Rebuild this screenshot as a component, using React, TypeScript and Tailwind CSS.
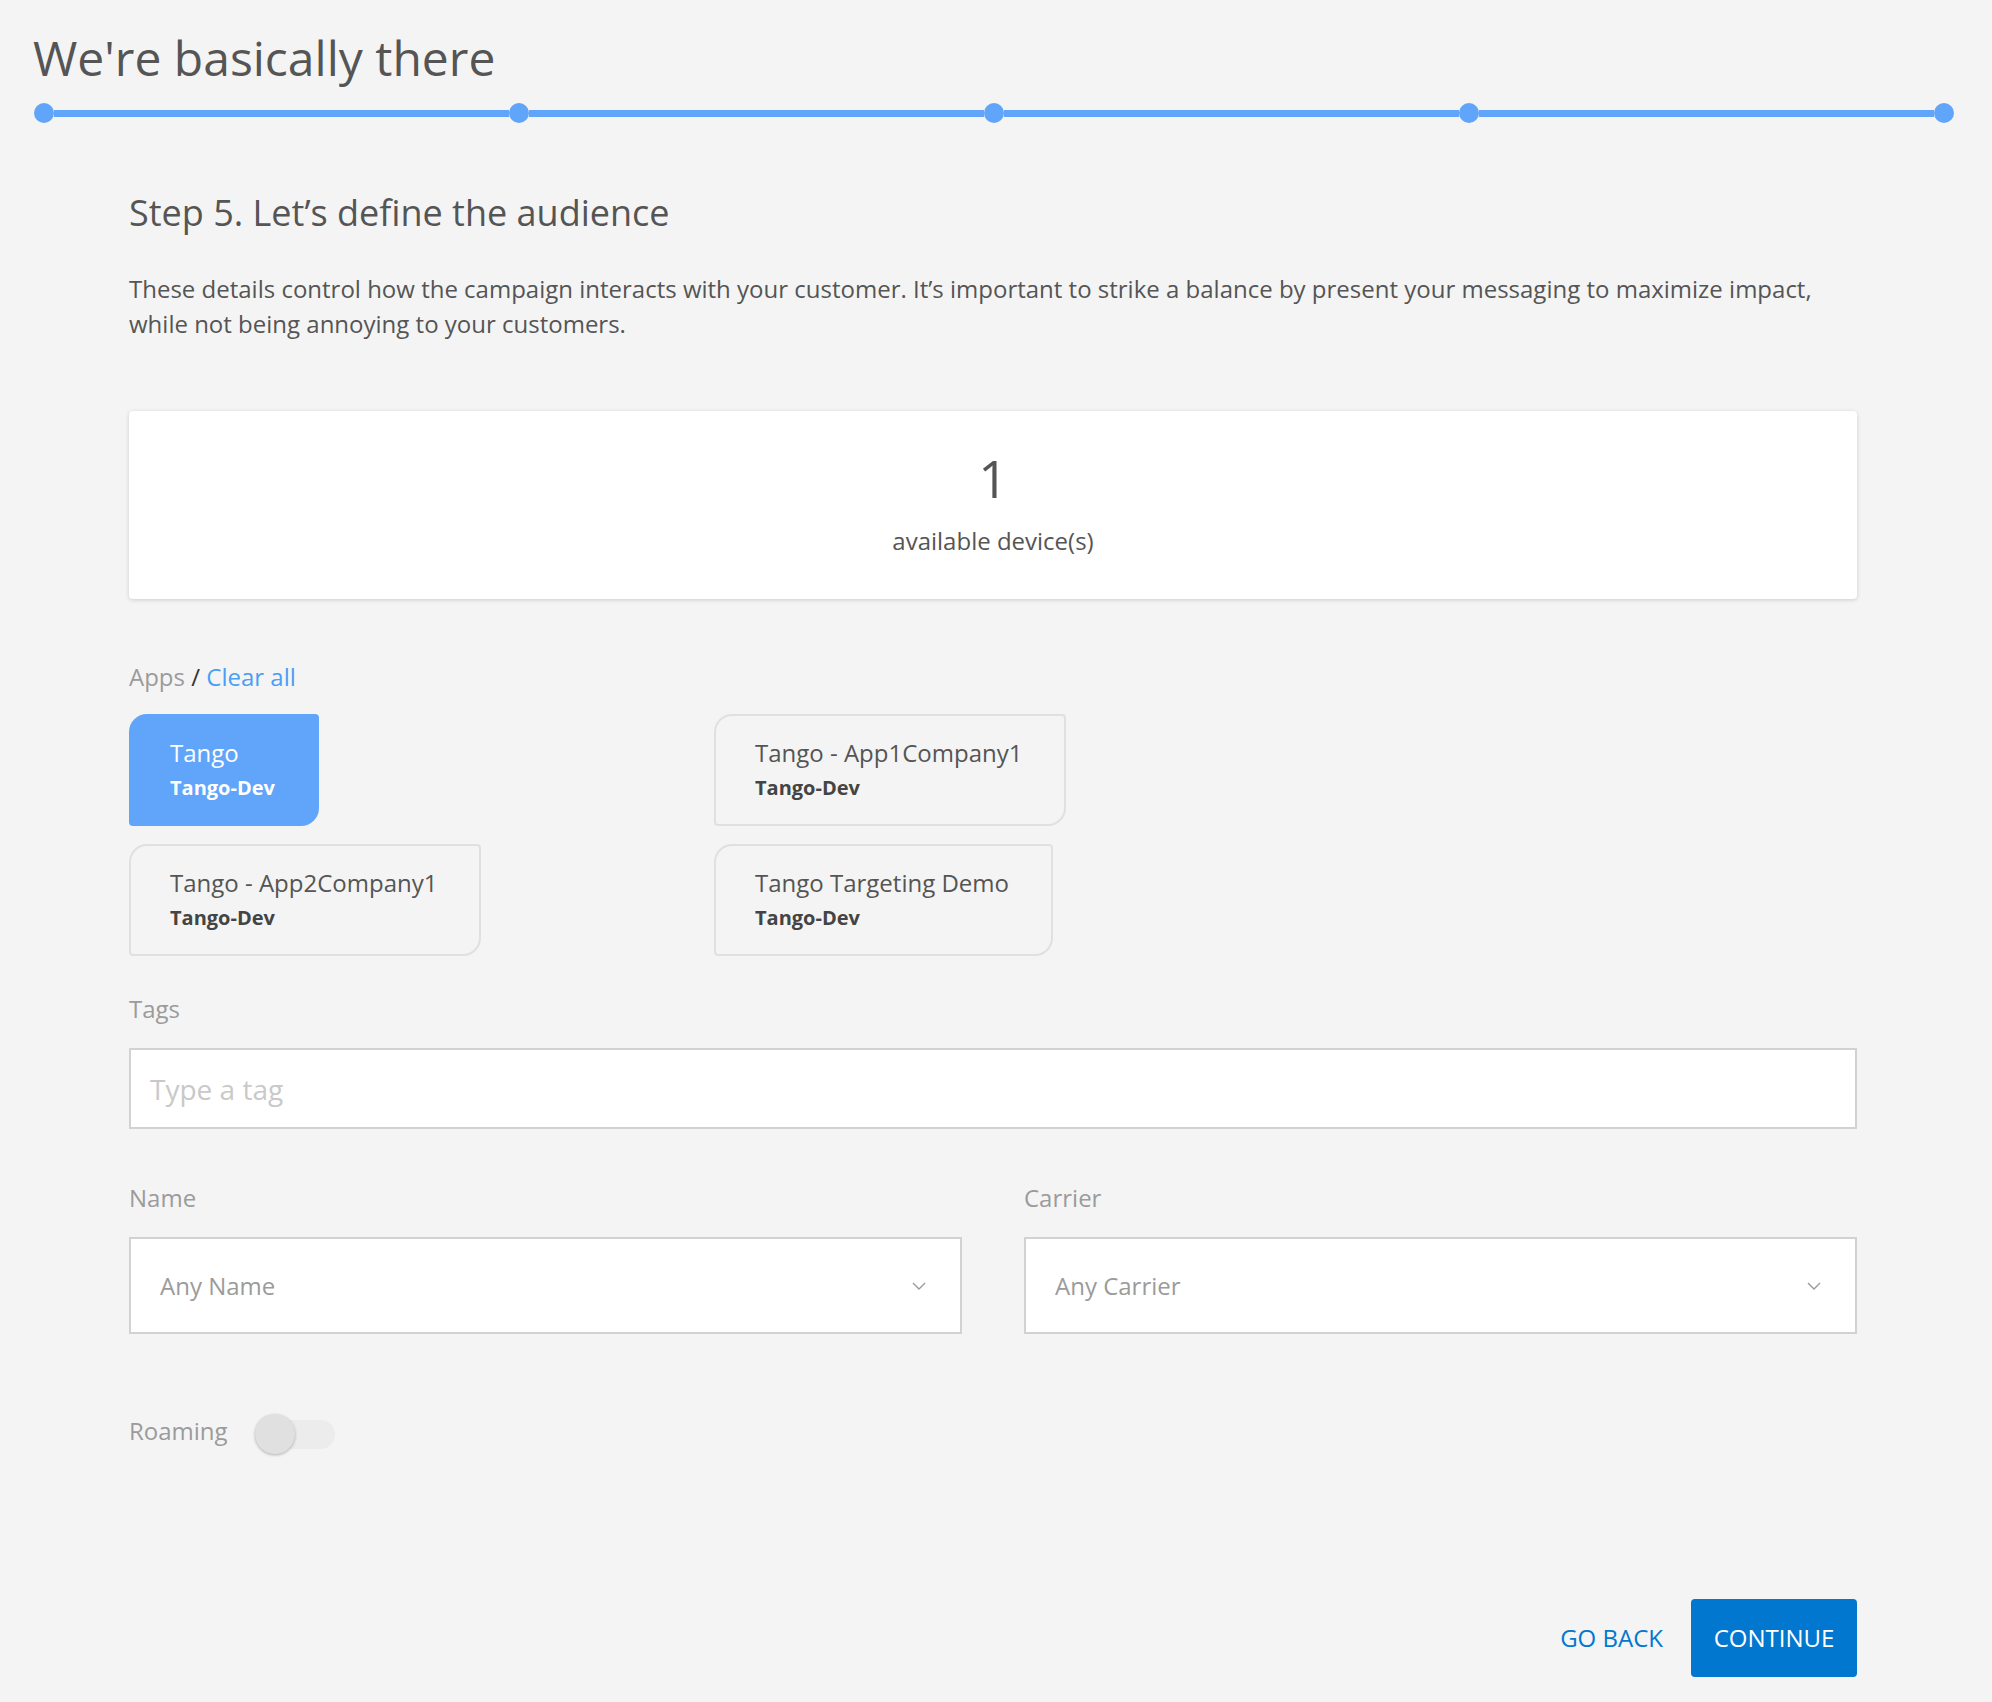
import React from 'react'

const APPS = [
  { name: 'Tango', org: 'Tango-Dev', selected: true },
  { name: 'Tango - App1Company1', org: 'Tango-Dev', selected: false },
  { name: 'Tango - App2Company1', org: 'Tango-Dev', selected: false },
  { name: 'Tango Targeting Demo', org: 'Tango-Dev', selected: false },
]

function Dot() {
  return <div className="h-[20px] w-[20px] shrink-0 rounded-full bg-[#60a5fa]" />
}

function Bar() {
  return <div className="h-[7px] flex-1 bg-[#60a5fa]" />
}

function Chevron() {
  return (
    <svg width="14" height="8" viewBox="0 0 14 8" fill="none">
      <polyline points="1,1 7,7 13,1" stroke="#9a9a9a" strokeWidth="1.4" />
    </svg>
  )
}

function SelectBox({ label, value }: { label: string; value: string }) {
  return (
    <div className="flex flex-col">
      <span className="text-[24px] leading-[24px] text-[#9b9b9b]">{label}</span>
      <div className="mt-[27px] flex h-[97px] items-center justify-between border-2 border-[#d2d2d2] bg-white pl-[29px] pr-[34px]">
        <span className="text-[24px] leading-[24px] text-[#9b9b9b]">{value}</span>
        <Chevron />
      </div>
    </div>
  )
}

export default function App() {
  return (
    <div className="min-h-screen bg-[#f4f4f4] font-['Open_Sans',sans-serif] text-[#555]">
      {/* header + progress */}
      <header className="pl-[34px] pr-[38px] pt-[34px]">
        <h1 className="-ml-px text-[48px] font-normal leading-[48px] text-[#555]">We're basically there</h1>
        <div className="mt-[21px] flex items-center">
          <Dot />
          <Bar />
          <Dot />
          <Bar />
          <Dot />
          <Bar />
          <Dot />
          <Bar />
          <Dot />
        </div>
      </header>

      <main className="pl-[129px] pr-[135px] pb-[24px]">
        <h2 className="mt-[72px] text-[36px] font-normal leading-[36px] text-[#555]">
          Step 5. Let’s define the audience
        </h2>
        <p className="mt-[40px] text-[24px] leading-[35px] text-[#555]">
          These details control how the campaign interacts with your customer. It’s important to strike a balance by
          present your messaging to maximize impact, while not being annoying to your customers.
        </p>

        {/* device count */}
        <div className="mt-[70px] flex h-[188px] flex-col items-center rounded-[4px] bg-white pt-[41px] shadow-[0_1px_4px_rgba(0,0,0,0.16)]">
          <span className="text-[52px] leading-[52px] text-[#555]">1</span>
          <span className="mt-[25px] text-[24px] leading-[24px] text-[#555]">available device(s)</span>
        </div>

        {/* apps */}
        <div className="mt-[66px] text-[24px] leading-[24px]">
          <span className="text-[#9b9b9b]">Apps</span>
          <span className="text-[#333]"> / </span>
          <span className="text-[#4a9ff5]">Clear all</span>
        </div>
        <div className="mt-[25px] grid grid-cols-[585px_auto] justify-start justify-items-start gap-y-[18px]">
          {APPS.map((app) => (
            <div
              key={app.name}
              className={
                app.selected
                  ? 'rounded-tl-[18px] rounded-tr-[4px] rounded-br-[18px] rounded-bl-[4px] border-2 border-[#60a5fa] bg-[#60a5fa] pl-[39px] pr-[42px] pt-[25px] pb-[26px] text-white'
                  : 'rounded-tl-[18px] rounded-tr-[4px] rounded-br-[18px] rounded-bl-[4px] border-2 border-[#e0e0e0] pl-[39px] pr-[42px] pt-[25px] pb-[26px] text-[#555]'
              }
            >
              <div className="text-[24px] leading-[24px]">{app.name}</div>
              <div className={app.selected ? 'mt-[13px] text-[20px] font-bold leading-[20px]' : 'mt-[13px] text-[20px] font-bold leading-[20px] text-[#444]'}>
                {app.org}
              </div>
            </div>
          ))}
        </div>

        {/* tags */}
        <div className="mt-[41px] text-[24px] leading-[24px] text-[#9b9b9b]">Tags</div>
        <div className="mt-[27px] flex h-[81px] items-center border-2 border-[#d2d2d2] bg-white pl-[19px]">
          <span className="text-[28px] leading-[28px] text-[#c9c9c9]">Type a tag</span>
        </div>

        {/* name / carrier */}
        <div className="mt-[57px] grid grid-cols-2 gap-x-[62px]">
          <SelectBox label="Name" value="Any Name" />
          <SelectBox label="Carrier" value="Any Carrier" />
        </div>

        {/* roaming */}
        <div className="mt-[80px] flex h-[40px] items-center">
          <span className="mb-[6px] text-[24px] leading-[24px] text-[#9b9b9b]">Roaming</span>
          <div className="ml-[27px] flex h-[29px] w-[80px] items-center rounded-full bg-[#ececec]">
            <div className="h-[40px] w-[40px] rounded-full bg-[#e0e0e0] shadow-[0_1px_3px_rgba(0,0,0,0.28)]" />
          </div>
        </div>

        {/* actions */}
        <div className="mt-[145px] flex items-center justify-end">
          <button className="mr-[28px] text-[24px] leading-[24px] text-[#0277d0]">GO BACK</button>
          <button className="flex h-[78px] w-[166px] items-center justify-center rounded-[4px] bg-[#0277d0] text-[24px] leading-[24px] text-white">
            CONTINUE
          </button>
        </div>
      </main>
    </div>
  )
}
